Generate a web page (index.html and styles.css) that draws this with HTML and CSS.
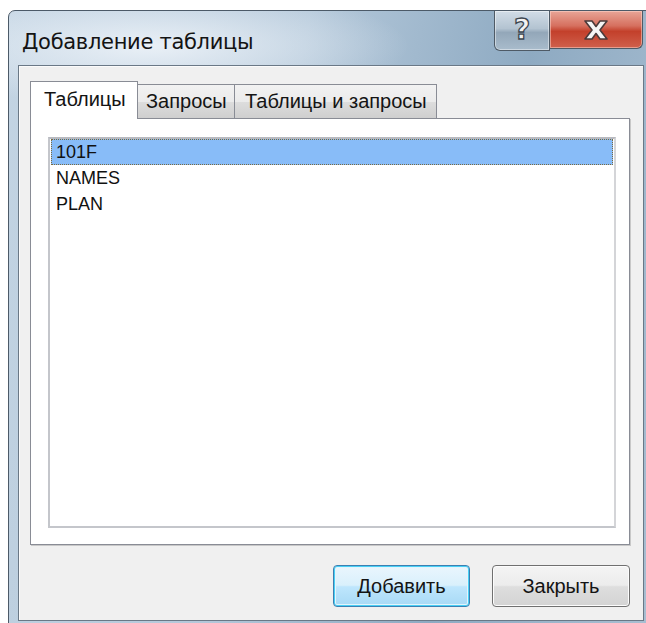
FILE: index.html
```html
<!DOCTYPE html>
<html lang="ru">
<head>
<meta charset="utf-8">
<title>Добавление таблицы</title>
<link rel="stylesheet" href="styles.css">
</head>
<body>
<div class="window">
  <div class="titlebar">
    <div class="title">Добавление таблицы</div>
    <div class="caption-buttons">
      <div class="cap-btn help"><span class="help-glyph">?</span></div>
      <div class="cap-btn close">
        <svg width="34" height="22" viewBox="0 0 34 22">
          <path d="M6 2 H13 L17 7.5 L21 2 H28 L21 11 L28 20 H21 L17 14.5 L13 20 H6 L13 11 Z" fill="#f4f4f4" stroke="#4a3a3a" stroke-width="1.6" stroke-linejoin="round"/>
        </svg>
      </div>
    </div>
  </div>
  <div class="client">
    <div class="tabs">
      <div class="tab active">Таблицы</div>
      <div class="tab">Запросы</div>
      <div class="tab">Таблицы и запросы</div>
    </div>
    <div class="tab-page">
      <div class="listbox">
        <div class="item selected">101F</div>
        <div class="item">NAMES</div>
        <div class="item">PLAN</div>
      </div>
    </div>
    <div class="actions">
      <button class="btn default">Добавить</button>
      <button class="btn">Закрыть</button>
    </div>
  </div>
</div>
</body>
</html>
```
FILE: styles.css
```css
html, body {
  margin: 0;
  padding: 0;
  background: #ffffff;
  overflow: hidden;
  height: 623px;
}

.window {
  margin: 10px 0 0 8px;
  width: 646px;
  height: 630px;
  box-sizing: border-box;
  border: 1px solid #4c5a68;
  border-radius: 7px 7px 0 0;
  background:
    radial-gradient(ellipse 260px 60px at 140px 35px, rgba(236, 242, 248, 0.95), rgba(236, 242, 248, 0) 100%),
    linear-gradient(100deg, #c3d4e3 0%, #b4c8da 40%, #8eaac2 70%, #a9bfd2 100%);
  font-family: "Liberation Sans", Arial, sans-serif;
  color: #111;
}

.titlebar {
  height: 54px;
  display: flex;
  justify-content: space-between;
  align-items: flex-start;
}

.title {
  padding: 19px 0 0 13px;
  font-family: "DejaVu Sans", sans-serif;
  font-size: 21px;
  letter-spacing: -0.3px;
  color: #141414;
}

.caption-buttons {
  display: flex;
  margin-right: 10px;
}

.cap-btn {
  height: 38px;
  display: flex;
  align-items: center;
  justify-content: center;
  box-sizing: border-box;
  border: 1px solid #4e5a66;
  border-top: none;
}

.help {
  width: 56px;
  height: 40px;
  border-radius: 0 0 0 6px;
  background: linear-gradient(180deg, #d2dde7 0%, #b3c3d1 45%, #93a7b9 55%, #a9bccc 100%);
  box-shadow: inset 0 0 0 1px rgba(255, 255, 255, 0.45);
}

.help-glyph {
  font-family: "DejaVu Sans", sans-serif;
  font-weight: bold;
  font-size: 28px;
  line-height: 1;
  color: #f2f2f2;
  -webkit-text-stroke: 1.3px #3d4650;
  margin-top: -2px;
}

.close {
  width: 93px;
  border-left: none;
  border-radius: 0 0 6px 0;
  background: linear-gradient(180deg, #e8a597 0%, #d6705f 40%, #c3402b 55%, #d0604c 100%);
  box-shadow: inset 0 0 0 1px rgba(255, 220, 210, 0.5);
}

.client {
  margin: 0 0 0 9px;
  width: 626px;
  height: 556px;
  box-sizing: border-box;
  border: 1px solid #6a7886;
  background: #f0f0f0;
  box-shadow: inset 1px 1px 0 #fbfbfb;
  padding: 15px 13px 0 11px;
  display: flex;
  flex-direction: column;
}

.tabs {
  display: flex;
  align-items: flex-end;
  height: 37px;
  position: relative;
  z-index: 1;
}

.tab {
  height: 34px;
  box-sizing: border-box;
  border: 1px solid #898c95;
  border-bottom: none;
  border-left: none;
  background: linear-gradient(180deg, #f2f2f2 0%, #ebebeb 50%, #dddddd 51%, #cfcfcf 100%);
  font-size: 20px;
  padding: 5px 0 0 8px;
  color: #141414;
  white-space: nowrap;
}

.tab.active {
  width: 108px;
  height: 38px;
  border-left: 1px solid #898c95;
  background: #ffffff;
  padding: 6px 0 0 13px;
  margin-bottom: -1px;
}

.tab:nth-child(2) {
  width: 97px;
}

.tab:nth-child(3) {
  width: 202px;
  padding-left: 10px;
}

.tab-page {
  width: 600px;
  height: 427px;
  box-sizing: border-box;
  border: 1px solid #898c95;
  background: #ffffff;
  padding: 18px 13px 16px 17px;
  box-shadow: 1px 1px 0 #c8c8c8;
}

.listbox {
  height: 391px;
  box-sizing: border-box;
  border: 2px solid #c4c6cb;
  border-color: #b8bac0 #d4d5d8 #c4c6cb #c4c6cb;
  padding: 0 1px;
  font-size: 18px;
}

.item {
  height: 26px;
  line-height: 26px;
  padding-left: 5px;
  box-sizing: border-box;
  color: #111;
}

.item.selected {
  background: #88bcf8;
  outline: 1px dotted #7a6a40;
  outline-offset: -1px;
}

.actions {
  display: flex;
  justify-content: flex-end;
  gap: 22px;
  margin-top: 20px;
}

.btn {
  width: 138px;
  height: 42px;
  box-sizing: border-box;
  border: 1px solid #707070;
  border-radius: 4px;
  background: linear-gradient(180deg, #f4f4f4 0%, #ececec 48%, #dedede 52%, #d3d3d3 100%);
  box-shadow: inset 0 0 0 1px #fcfcfc;
  font-family: "Liberation Sans", Arial, sans-serif;
  font-size: 20px;
  color: #141414;
  padding: 0;
}

.btn.default {
  width: 137px;
  border-color: #3c7fb1;
  background: linear-gradient(180deg, #eaf6fd 0%, #d9f0fc 48%, #bee6fd 52%, #a7d9f5 100%);
  box-shadow: inset 0 0 0 1px #48d0f6, inset 0 0 0 2px #e4f4fc;
}
```
